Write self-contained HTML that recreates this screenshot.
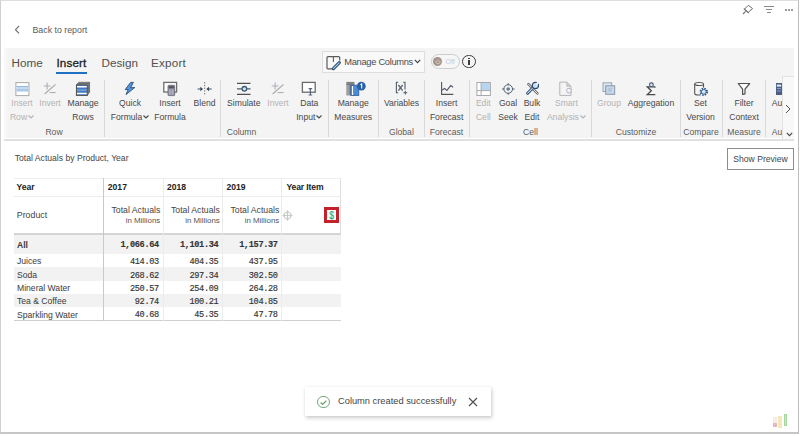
<!DOCTYPE html>
<html><head><meta charset="utf-8"><style>
*{box-sizing:border-box}
html,body{margin:0;padding:0}
body{width:800px;height:436px;position:relative;overflow:hidden;background:#fff;font-family:"Liberation Sans", sans-serif;color:#333}
.a{position:absolute}
.rl{position:absolute;width:80px;text-align:center;font-size:8.6px;line-height:12px;white-space:nowrap}
.gl{position:absolute;width:80px;text-align:center;font-size:8.6px;line-height:12px;top:126px;color:#5c5c5c;white-space:nowrap}
.sep{position:absolute;top:80px;width:1px;height:57px;background:#d9d9d9}
.ic{position:absolute;width:20px;height:20px}
.ic svg{display:block}
.tc{position:absolute;font-size:8.6px;line-height:12px;color:#3a3a3a;white-space:nowrap}
.tv{position:absolute;width:60.35px;text-align:right;font-family:"Liberation Mono", monospace;font-size:8.6px;letter-spacing:-0.35px;line-height:12px;color:#333;white-space:nowrap;-webkit-text-stroke:0.15px #333}
</style></head><body>
<!-- outer frame -->
<div class="a" style="left:0;top:0;width:798.5px;height:434px;border:1px solid #d0d0d0;border-top-color:#dedede;border-right:1.5px solid #bdbdbd;border-bottom:2px solid #c6c6c6"></div>

<!-- top-right icons -->
<svg class="a" style="left:738px;top:0px" width="20" height="18" viewBox="0 0 20 18">
  <path d="M10.3 5.3 L14.6 8.6 L10.2 12.4 L6.5 9.1 Z" fill="none" stroke="#707070" stroke-width="1" stroke-linejoin="round"/>
  <path d="M5.8 8.6 L10.8 13.1" stroke="#707070" stroke-width="1.1"/>
  <path d="M7.6 11.4 L5 14" stroke="#707070" stroke-width="1.1"/>
</svg>
<div class="a" style="left:764px;top:5.5px;width:10px;height:1px;background:#8c8c8c"></div>
<div class="a" style="left:765.5px;top:8.5px;width:6.5px;height:1px;background:#8c8c8c"></div>
<div class="a" style="left:767px;top:11.5px;width:3.5px;height:1px;background:#8c8c8c"></div>
<div class="a" style="left:785px;top:8.8px;width:2px;height:2px;border-radius:1px;background:#7a7a7a"></div>
<div class="a" style="left:788.2px;top:8.8px;width:2px;height:2px;border-radius:1px;background:#7a7a7a"></div>
<div class="a" style="left:791.4px;top:8.8px;width:2px;height:2px;border-radius:1px;background:#7a7a7a"></div>

<!-- back to report -->
<svg class="a" style="left:14px;top:25px" width="7" height="10" viewBox="0 0 7 10"><path d="M5 1 L1.5 4.7 L5 8.4" fill="none" stroke="#6b6b6b" stroke-width="1.1"/></svg>
<div class="a" style="left:32.5px;top:23px;font-size:8.8px;line-height:14px;color:#5a5a5a;white-space:nowrap">Back to report</div>

<!-- ribbon -->
<div class="a" style="left:3.5px;top:48px;width:790px;height:89.8px;background:#f8f8f8"></div>
<div class="a" style="left:6.5px;top:48px;width:787px;height:89.8px;background:#f4f4f4"></div>
<div class="a" style="left:4px;top:138.8px;width:789.5px;height:2px;background:#e0e0e0"></div>
<div class="a" style="left:11.5px;top:55px;font-size:11.7px;line-height:16px;color:#505050">Home</div>
<div class="a" style="left:56.5px;top:55px;font-size:11.7px;line-height:16px;color:#222;letter-spacing:0.1px;-webkit-text-stroke:0.3px #222">Insert</div>
<div class="a" style="left:56px;top:72px;width:30.5px;height:2px;background:#1f6fc2"></div>
<div class="a" style="left:101.5px;top:55px;font-size:11.7px;line-height:16px;color:#505050">Design</div>
<div class="a" style="left:151px;top:55px;font-size:11.7px;line-height:16px;color:#505050;letter-spacing:0.2px">Export</div>

<!-- manage columns -->
<div class="a" style="left:321.8px;top:51.2px;width:103px;height:21.5px;border:1px solid #dedede;background:#f9f9f9"></div>
<div class="a" style="left:344.3px;top:54.5px;font-size:9.3px;line-height:14px;color:#4c4c4c;white-space:nowrap;letter-spacing:-0.3px">Manage Columns</div>
<svg class="a" style="left:325px;top:55px" width="17" height="16" viewBox="0 0 17 16">
  <path d="M7.6 13.9 H3 Q2 13.9 2 12.9 V2.6 Q2 1.6 3 1.6 H13.7 Q14.7 1.6 14.7 2.6 V5.5" fill="none" stroke="#5a5a5a" stroke-width="1.2"/>
  <path d="M8.4 1.6 V7" stroke="#5a5a5a" stroke-width="1.1"/>
  <path d="M8.4 13.6 L14.3 7.7" stroke="#2f4a6a" stroke-width="3.2" stroke-linecap="round"/>
  <path d="M8.6 13.4 L14.1 7.9" stroke="#a8d0f0" stroke-width="1.2" stroke-linecap="round"/>
</svg>
<svg class="a" style="left:414px;top:59px" width="7" height="5" viewBox="0 0 7 5"><path d="M0.8 0.8 L3.5 3.6 L6.2 0.8" fill="none" stroke="#444" stroke-width="1.2"/></svg>
<div class="a" style="left:430.5px;top:54.2px;width:29px;height:15.3px;border:1px solid #cdcdcd;border-radius:8px;background:#f6f6f6"></div>
<div class="a" style="left:433.4px;top:57.4px;width:9px;height:9px;border-radius:5px;background:#a3938a"></div>
<svg class="a" style="left:435px;top:59px" width="6" height="6" viewBox="0 0 6 6"><path d="M3 0.6 V2.6 M1.4 1.6 A2 2 0 1 0 4.6 1.6" fill="none" stroke="#e8e0da" stroke-width="0.7"/></svg>
<div class="a" style="left:445.4px;top:55.8px;font-size:7.2px;line-height:12px;color:#c8cdd8">Off</div>
<div class="a" style="left:462.1px;top:54.7px;width:13.8px;height:13.8px;border:1.15px solid #3c3c3c;border-radius:7px"></div>
<div class="a" style="left:468.3px;top:57.6px;width:1.4px;height:1.4px;background:#3c3c3c"></div>
<div class="a" style="left:468.3px;top:60.4px;width:1.4px;height:4.6px;background:#3c3c3c"></div>

<div class="rl" style="left:-18px;top:97px;color:#b3b3b3">Insert</div>
<div class="rl" style="left:-18px;top:110.5px;color:#b3b3b3">Row<svg width="6" height="4" viewBox="0 0 6 4" style="margin-left:1px;vertical-align:1px"><path d="M0.5 0.5 L3 3 L5.5 0.5" fill="none" stroke="#b3b3b3" stroke-width="1.1"/></svg></div>
<div class="ic" style="left:12px;top:78px"><svg width="20" height="20" viewBox="0 0 20 20"><rect x="3.9" y="4.6" width="13" height="13" fill="#fff" stroke="#a8a8a8" stroke-width="1"/><rect x="4.4" y="8" width="12" height="5.8" fill="#c3dbf0"/><path d="M4.4 8.5 H16.4 M4.4 12 H16.4" stroke="#8fb4d8" stroke-width="0.9"/></svg></div>
<div class="rl" style="left:10px;top:97px;color:#b3b3b3">Invert</div>
<div class="ic" style="left:40px;top:78px"><svg width="20" height="20" viewBox="0 0 20 20"><path d="M7.1 4.6 V11.5 M3.7 8 H10.5" stroke="#a9b0b8" stroke-width="1.1"/><path d="M4.6 16 L15.6 6.4" stroke="#a8a8a8" stroke-width="1.1"/><path d="M9.6 14.6 H15.6" stroke="#a8a8a8" stroke-width="1"/></svg></div>
<div class="rl" style="left:43px;top:97px;color:#484848">Manage</div>
<div class="rl" style="left:43px;top:110.5px;color:#484848">Rows</div>
<div class="ic" style="left:73px;top:78px"><svg width="20" height="20" viewBox="0 0 20 20"><rect x="5.8" y="4.3" width="10.8" height="10" fill="#9a9a9a" stroke="#6a6a6a" stroke-width="0.9"/><rect x="4.6" y="5.5" width="10.8" height="10.5" fill="#b4b4b4" stroke="#6a6a6a" stroke-width="0.9"/><rect x="3.5" y="6.8" width="10.8" height="10.6" fill="#3f7bc4" stroke="#555" stroke-width="1.1"/><path d="M4 8.7 H13.8 M4 15.5 H13.8" stroke="#fff" stroke-width="1.4"/><path d="M4 12.1 H13.8" stroke="#9cc0e8" stroke-width="0.9"/></svg></div>
<div class="rl" style="left:90px;top:97px;color:#484848">Quick</div>
<div class="rl" style="left:90px;top:110.5px;color:#484848">Formula<svg width="6" height="4" viewBox="0 0 6 4" style="margin-left:1px;vertical-align:1px"><path d="M0.5 0.5 L3 3 L5.5 0.5" fill="none" stroke="#484848" stroke-width="1.1"/></svg></div>
<div class="ic" style="left:120px;top:78px"><svg width="20" height="20" viewBox="0 0 20 20"><path d="M10.6 4.4 L13.4 4.4 L10.6 9.7 L14.8 9.5 L6 16.6 L8.2 11.5 L5.2 11.6 Z" fill="#4d95e0" stroke="#2f4f72" stroke-width="0.9" stroke-linejoin="round"/></svg></div>
<div class="rl" style="left:130px;top:97px;color:#484848">Insert</div>
<div class="rl" style="left:130px;top:110.5px;color:#484848">Formula</div>
<div class="ic" style="left:160px;top:78px"><svg width="20" height="20" viewBox="0 0 20 20"><rect x="3.8" y="4.4" width="12.8" height="9.6" fill="#fff" stroke="#6d6d6d" stroke-width="1.3"/><rect x="8" y="7.3" width="6.7" height="10.3" rx="0.8" fill="#9c9cae" stroke="#5e5e68" stroke-width="0.8"/><rect x="8.8" y="8.2" width="5.1" height="2.2" fill="#505058"/><path d="M9.8 11.8 V16.5 M12.6 11.8 V16.5" stroke="#c8c8d4" stroke-width="0.6"/></svg></div>
<div class="rl" style="left:164.5px;top:97px;color:#484848">Blend</div>
<div class="ic" style="left:194.5px;top:78px"><svg width="20" height="20" viewBox="0 0 20 20"><path d="M9.7 4.2 V17" stroke="#6a6a6a" stroke-width="1" stroke-dasharray="1.3 1.4"/><path d="M2.6 11 H7" stroke="#4a5a70" stroke-width="1.1"/><path d="M5.4 8.8 L8 11 L5.4 13.2 Z" fill="#34465e"/><path d="M16.6 11 H12.4" stroke="#4a5a70" stroke-width="1.1"/><path d="M14 8.8 L11.4 11 L14 13.2 Z" fill="#34465e"/></svg></div>
<div class="rl" style="left:203.8px;top:97px;color:#484848">Simulate</div>
<div class="ic" style="left:233.8px;top:78px"><svg width="20" height="20" viewBox="0 0 20 20"><path d="M3 5.3 H16.5 M3 16.3 H16.5" stroke="#505050" stroke-width="1.2"/><path d="M3 10.8 H7.9 M12.9 10.8 H16.5" stroke="#505a64" stroke-width="1.2"/><circle cx="10.4" cy="10.8" r="2.3" fill="#cfe3f4" stroke="#3d5a78" stroke-width="1.3"/></svg></div>
<div class="rl" style="left:238px;top:97px;color:#b3b3b3">Invert</div>
<div class="ic" style="left:268px;top:78px"><svg width="20" height="20" viewBox="0 0 20 20"><path d="M7.1 4.6 V11.5 M3.7 8 H10.5" stroke="#a9b0b8" stroke-width="1.1"/><path d="M4.6 16 L15.6 6.4" stroke="#a8a8a8" stroke-width="1.1"/><path d="M9.6 14.6 H15.6" stroke="#a8a8a8" stroke-width="1"/></svg></div>
<div class="rl" style="left:269.3px;top:97px;color:#484848">Data</div>
<div class="rl" style="left:269.3px;top:110.5px;color:#484848">Input<svg width="6" height="4" viewBox="0 0 6 4" style="margin-left:1px;vertical-align:1px"><path d="M0.5 0.5 L3 3 L5.5 0.5" fill="none" stroke="#484848" stroke-width="1.1"/></svg></div>
<div class="ic" style="left:299.3px;top:78px"><svg width="20" height="20" viewBox="0 0 20 20"><rect x="3.4" y="4.4" width="12.8" height="9.8" fill="#fff" stroke="#6a6a6a" stroke-width="1.3"/><path d="M9.6 10.6 H13.2 M11.4 10.6 V16.6 M9.6 17 H13.2" stroke="#55657a" stroke-width="1.2"/></svg></div>
<div class="rl" style="left:313.2px;top:97px;color:#484848">Manage</div>
<div class="rl" style="left:313.2px;top:110.5px;color:#484848">Measures</div>
<div class="ic" style="left:343.2px;top:78px"><svg width="24" height="20" viewBox="0 0 24 20"><rect x="3.4" y="4.4" width="8" height="13" fill="#8c8c8c"/><path d="M3.4 4.4 H11.4 M3.4 6.2 H11.4" stroke="#6a6a6a" stroke-width="0.8"/><path d="M5 7 V17" stroke="#b8b8b8" stroke-width="0.9"/><rect x="7.8" y="7.2" width="8" height="10.2" fill="#4a8ad6" stroke="#2d5d98" stroke-width="0.8"/><path d="M9.5 8 V17" stroke="#ffffff" stroke-width="1.2"/><circle cx="18.3" cy="8.2" r="4.4" fill="#2760a8"/><path d="M17.4 6.9 L18.7 5.9 V10.4" fill="none" stroke="#fff" stroke-width="1.1"/></svg></div>
<div class="rl" style="left:361.5px;top:97px;color:#484848">Variables</div>
<div class="ic" style="left:391.5px;top:78px"><svg width="20" height="20" viewBox="0 0 20 20"><path d="M6.2 4.3 H4.4 V14.7 H6.2" fill="none" stroke="#555d66" stroke-width="1.1"/><path d="M11.2 4.3 H13 V11.6" fill="none" stroke="#555d66" stroke-width="1.1"/><path d="M6.4 7 L10.6 12.6 M10.6 7 L6.4 12.6" stroke="#5a6572" stroke-width="1.35"/><path d="M13.3 12.8 V16.6 M11.4 14.7 H15.2" stroke="#4a5a70" stroke-width="1"/></svg></div>
<div class="rl" style="left:406.6px;top:97px;color:#484848">Insert</div>
<div class="rl" style="left:406.6px;top:110.5px;color:#484848">Forecast</div>
<div class="ic" style="left:436.6px;top:78px"><svg width="20" height="20" viewBox="0 0 20 20"><path d="M4.6 4.1 V16.4 H16.3" fill="none" stroke="#555" stroke-width="1.1"/><path d="M4.6 12.3 L7.6 10.5 L9.9 12.4 L13.7 7.6 L16.1 9.3" fill="none" stroke="#505a66" stroke-width="1.1"/></svg></div>
<div class="rl" style="left:443.3px;top:97px;color:#b3b3b3">Edit</div>
<div class="rl" style="left:443.3px;top:110.5px;color:#b3b3b3">Cell</div>
<div class="ic" style="left:473.3px;top:78px"><svg width="20" height="20" viewBox="0 0 20 20"><rect x="3.9" y="4.5" width="13.5" height="13" fill="#fff" stroke="#a9a9a9" stroke-width="1"/><rect x="8.2" y="5" width="8.7" height="7.5" fill="#b5d5f2"/><path d="M8.1 4.5 V17.5 M3.9 12.6 H17.4" stroke="#a9a9a9" stroke-width="1"/></svg></div>
<div class="rl" style="left:468px;top:97px;color:#484848">Goal</div>
<div class="rl" style="left:468px;top:110.5px;color:#484848">Seek</div>
<div class="ic" style="left:498px;top:78px"><svg width="20" height="20" viewBox="0 0 20 20"><circle cx="10.2" cy="11" r="4.3" fill="#eef4fa" stroke="#59616b" stroke-width="1"/><circle cx="10.2" cy="11" r="1.8" fill="#6a7886"/><path d="M10.2 5.2 V7.2 M10.2 14.8 V16.8 M4 11 H6.2 M14.2 11 H16.6" stroke="#59616b" stroke-width="1"/></svg></div>
<div class="rl" style="left:492px;top:97px;color:#484848">Bulk</div>
<div class="rl" style="left:492px;top:110.5px;color:#484848">Edit</div>
<div class="ic" style="left:522px;top:78px"><svg width="20" height="20" viewBox="0 0 20 20"><path d="M6.4 6.2 L15.4 15.4" stroke="#707070" stroke-width="2.6" stroke-linecap="round"/><path d="M6.4 6.2 L15.4 15.4" stroke="#e4e4e4" stroke-width="1" stroke-linecap="round"/><path d="M5.6 15.2 L12 8.8" stroke="#2c4a6e" stroke-width="3" stroke-linecap="round"/><path d="M5.6 15.2 L12 8.8" stroke="#c4dcf4" stroke-width="1.1" stroke-linecap="round"/><circle cx="13.4" cy="7.4" r="3.1" fill="#c4dcf4" stroke="#2c4a6e" stroke-width="1.2"/><path d="M13.8 7 L16.6 4.2" stroke="#f4f4f4" stroke-width="2"/></svg></div>
<div class="rl" style="left:526.4px;top:97px;color:#b3b3b3">Smart</div>
<div class="rl" style="left:526.4px;top:110.5px;color:#b3b3b3">Analysis<svg width="6" height="4" viewBox="0 0 6 4" style="margin-left:1px;vertical-align:1px"><path d="M0.5 0.5 L3 3 L5.5 0.5" fill="none" stroke="#b3b3b3" stroke-width="1.1"/></svg></div>
<div class="ic" style="left:556.4px;top:78px"><svg width="20" height="20" viewBox="0 0 20 20"><path d="M3.8 4.1 H10.8 L15 8.2 V17.4 H3.8 Z" fill="none" stroke="#b4b4b4" stroke-width="1"/><path d="M10.8 4.1 V8.2 H15" fill="#d0d0d0" stroke="#b4b4b4" stroke-width="0.8"/><circle cx="13" cy="12.6" r="2.4" fill="#f3f3f3" stroke="#b0b4c0" stroke-width="1"/></svg></div>
<div class="rl" style="left:569px;top:97px;color:#b3b3b3">Group</div>
<div class="ic" style="left:599px;top:78px"><svg width="20" height="20" viewBox="0 0 20 20"><rect x="4" y="4.8" width="8.7" height="8.7" fill="#dbe7f3" stroke="#9aa6b4" stroke-width="1"/><rect x="6.7" y="7.8" width="9" height="8.5" fill="#c6d8ea" stroke="#8a98a8" stroke-width="1"/><rect x="8.8" y="9.8" width="4" height="4" fill="#b3c8dc"/></svg></div>
<div class="rl" style="left:611px;top:97px;color:#484848">Aggregation</div>
<div class="ic" style="left:641px;top:78px"><svg width="20" height="20" viewBox="0 0 20 20"><path d="M14.3 8.8 H6.3 L10.3 12.7 L6.3 16.6 H14.3" fill="none" stroke="#484848" stroke-width="1.3" stroke-linejoin="miter"/><circle cx="10.4" cy="6.8" r="1.9" fill="#dce8f4" stroke="#4a5a72" stroke-width="1.1"/><path d="M13.8 8.6 L14.2 9.6" stroke="#4a5a72" stroke-width="1"/></svg></div>
<div class="rl" style="left:660.5px;top:97px;color:#484848">Set</div>
<div class="rl" style="left:660.5px;top:110.5px;color:#484848">Version</div>
<div class="ic" style="left:690.5px;top:78px"><svg width="20" height="20" viewBox="0 0 20 20"><ellipse cx="8.1" cy="6" rx="4.4" ry="1.5" fill="#fff" stroke="#555" stroke-width="1.1"/><path d="M3.7 6 V15.6 A4.4 1.5 0 0 0 9.6 16.9" fill="none" stroke="#555" stroke-width="1.1"/><path d="M12.5 6 V9.6" stroke="#555" stroke-width="1.1"/><circle cx="12.8" cy="13.8" r="3.3" fill="none" stroke="#2c5a8a" stroke-width="1.8" stroke-dasharray="1.5 1.1"/><circle cx="12.8" cy="13.8" r="2.4" fill="#d8e6f4" stroke="#2c5a8a" stroke-width="0.9"/></svg></div>
<div class="rl" style="left:704px;top:97px;color:#484848">Filter</div>
<div class="rl" style="left:704px;top:110.5px;color:#484848">Context</div>
<div class="ic" style="left:734px;top:78px"><svg width="20" height="20" viewBox="0 0 20 20"><path d="M4.2 5.5 H15.7 L11 11.2 V15.8 L8.6 16.3 V11.2 Z" fill="#fff" stroke="#505050" stroke-width="1.2" stroke-linejoin="round"/></svg></div>
<div class="rl" style="left:737px;top:97px;color:#484848">Au</div>
<div class="ic" style="left:767px;top:78px"><svg width="20" height="20" viewBox="0 0 20 20"><rect x="9" y="5" width="6" height="12" fill="#4a5e86"/><rect x="9.8" y="6.6" width="4.4" height="2" fill="#e8eef8"/><path d="M10 10.5 H14 M10 13 H14" stroke="#9ab0d8" stroke-width="0.8"/></svg></div>
<div class="sep" style="left:103.5px"></div>
<div class="sep" style="left:220.0px"></div>
<div class="sep" style="left:328.1px"></div>
<div class="sep" style="left:377.5px"></div>
<div class="sep" style="left:423.7px"></div>
<div class="sep" style="left:469.3px"></div>
<div class="sep" style="left:590.5px"></div>
<div class="sep" style="left:680.3px"></div>
<div class="sep" style="left:722.0px"></div>
<div class="sep" style="left:765.2px"></div>
<div class="gl" style="left:14px">Row</div>
<div class="gl" style="left:201.5px">Column</div>
<div class="gl" style="left:361.4px">Global</div>
<div class="gl" style="left:406.5px">Forecast</div>
<div class="gl" style="left:490.5px">Cell</div>
<div class="gl" style="left:596px">Customize</div>
<div class="gl" style="left:661px">Compare</div>
<div class="gl" style="left:704px">Measure</div>
<div class="gl" style="left:737px">Au</div>

<!-- ribbon scroll panel -->
<div class="a" style="left:782px;top:76px;width:12px;height:64px;background:#f8f8f8;border:1px solid #e2e2e2;border-right:none"></div>
<svg class="a" style="left:785px;top:103.5px" width="7" height="10" viewBox="0 0 7 10"><path d="M1 1 L5 5 L1 9" fill="none" stroke="#555" stroke-width="1"/></svg>
<svg class="a" style="left:785.5px;top:132px" width="7" height="5" viewBox="0 0 7 5"><path d="M0.8 0.8 L3.5 3.6 L6.2 0.8" fill="none" stroke="#444" stroke-width="1.1"/></svg>

<!-- content -->
<div class="a" style="left:14.8px;top:150.6px;font-size:8.6px;line-height:14px;color:#444;white-space:nowrap">Total Actuals by Product, Year</div>
<div class="a" style="left:727px;top:148px;width:67px;height:22px;border:1px solid #8c8c8c;background:#fff"></div>
<div class="a" style="left:727px;top:152px;width:67px;text-align:center;font-size:8.6px;line-height:14px;color:#444">Show Preview</div>

<!-- table -->
<div class="a" style="left:14px;top:177.5px;width:327px;height:143.5px;border-top:1px solid #efefef;border-right:1px solid #dedede;border-bottom:1px solid #cfcfcf"></div>
<div style="position:absolute;left:14px;top:234.5px;width:327px;height:19.099999999999994px;background:#f2f2f2"></div>
<div style="position:absolute;left:14px;top:253.6px;width:327px;height:13.599999999999994px;background:#ffffff"></div>
<div style="position:absolute;left:14px;top:267.2px;width:327px;height:13.600000000000023px;background:#f2f2f2"></div>
<div style="position:absolute;left:14px;top:280.8px;width:327px;height:13.399999999999977px;background:#ffffff"></div>
<div style="position:absolute;left:14px;top:294.2px;width:327px;height:13.0px;background:#f2f2f2"></div>
<div style="position:absolute;left:14px;top:307.2px;width:327px;height:13.300000000000011px;background:#ffffff"></div>
<div class="tc" style="left:17px;top:238.65px;font-weight:bold">All</div>
<div class="tv" style="left:98.5px;top:239.05px;font-weight:bold">1,066.64</div>
<div class="tv" style="left:158px;top:239.05px;font-weight:bold">1,101.34</div>
<div class="tv" style="left:217.3px;top:239.05px;font-weight:bold">1,157.37</div>
<div class="tc" style="left:17px;top:255.09999999999997px;font-weight:normal">Juices</div>
<div class="tv" style="left:98.5px;top:255.89999999999998px;font-weight:normal">414.03</div>
<div class="tv" style="left:158px;top:255.89999999999998px;font-weight:normal">404.35</div>
<div class="tv" style="left:217.3px;top:255.89999999999998px;font-weight:normal">437.95</div>
<div class="tc" style="left:17px;top:268.7px;font-weight:normal">Soda</div>
<div class="tv" style="left:98.5px;top:269.5px;font-weight:normal">268.62</div>
<div class="tv" style="left:158px;top:269.5px;font-weight:normal">297.34</div>
<div class="tv" style="left:217.3px;top:269.5px;font-weight:normal">302.50</div>
<div class="tc" style="left:17px;top:282.2px;font-weight:normal">Mineral Water</div>
<div class="tv" style="left:98.5px;top:283.0px;font-weight:normal">250.57</div>
<div class="tv" style="left:158px;top:283.0px;font-weight:normal">254.09</div>
<div class="tv" style="left:217.3px;top:283.0px;font-weight:normal">264.28</div>
<div class="tc" style="left:17px;top:295.4px;font-weight:normal">Tea &amp; Coffee</div>
<div class="tv" style="left:98.5px;top:296.2px;font-weight:normal">92.74</div>
<div class="tv" style="left:158px;top:296.2px;font-weight:normal">100.21</div>
<div class="tv" style="left:217.3px;top:296.2px;font-weight:normal">104.85</div>
<div class="tc" style="left:17px;top:308.55px;font-weight:normal">Sparkling Water</div>
<div class="tv" style="left:98.5px;top:309.35px;font-weight:normal">40.68</div>
<div class="tv" style="left:158px;top:309.35px;font-weight:normal">45.35</div>
<div class="tv" style="left:217.3px;top:309.35px;font-weight:normal">47.78</div>
<div class="a" style="left:14px;top:196px;width:327px;height:1px;background:#ececec"></div>
<div class="a" style="left:14px;top:232.5px;width:327px;height:2px;background:#d4d4d4"></div>
<div class="a" style="left:103px;top:178px;width:1px;height:143px;background:#c9c9c9"></div>
<div class="a" style="left:162.5px;top:178px;width:1px;height:143px;background:#ececec"></div>
<div class="a" style="left:221.8px;top:178px;width:1px;height:143px;background:#ececec"></div>
<div class="a" style="left:281.3px;top:178px;width:1px;height:143px;background:#ececec"></div>
<div class="a" style="left:16.5px;top:180.5px;font-size:8.6px;line-height:12px;font-weight:bold;color:#222">Year</div>
<div class="a" style="left:107.8px;top:180.5px;font-size:8.6px;line-height:12px;font-weight:bold;color:#222">2017</div>
<div class="a" style="left:167px;top:180.5px;font-size:8.6px;line-height:12px;font-weight:bold;color:#222">2018</div>
<div class="a" style="left:226.5px;top:180.5px;font-size:8.6px;line-height:12px;font-weight:bold;color:#222">2019</div>
<div class="a" style="left:286.5px;top:180.5px;font-size:8.6px;line-height:12px;font-weight:bold;color:#222;white-space:nowrap;letter-spacing:-0.15px">Year Item</div>
<div class="a" style="left:16.8px;top:209px;font-size:8.8px;line-height:12px;color:#444">Product</div>
<div class="a" style="left:100px;top:204px;width:60.3px;text-align:right;font-size:8.7px;line-height:12px;color:#444;white-space:nowrap">Total Actuals</div>
<div class="a" style="left:159.5px;top:204px;width:60.3px;text-align:right;font-size:8.7px;line-height:12px;color:#444;white-space:nowrap">Total Actuals</div>
<div class="a" style="left:219px;top:204px;width:60.3px;text-align:right;font-size:8.7px;line-height:12px;color:#444;white-space:nowrap">Total Actuals</div>
<div class="a" style="left:100px;top:216px;width:60.3px;text-align:right;font-size:7.9px;line-height:10px;color:#555;white-space:nowrap">in Millions</div>
<div class="a" style="left:159.5px;top:216px;width:60.3px;text-align:right;font-size:7.9px;line-height:10px;color:#555;white-space:nowrap">in Millions</div>
<div class="a" style="left:219px;top:216px;width:60.3px;text-align:right;font-size:7.9px;line-height:10px;color:#555;white-space:nowrap">in Millions</div>
<!-- move icon + $ -->
<svg class="a" style="left:282px;top:209.5px" width="11" height="11" viewBox="0 0 11 11"><path d="M5.5 0.8 V10.2 M1 5.5 H10 M3.6 2.6 L5.5 0.8 L7.4 2.6 M3.6 8.4 L5.5 10.2 L7.4 8.4 M2.4 3.9 L1 5.5 L2.4 7.1 M8.6 3.9 L10 5.5 L8.6 7.1" fill="none" stroke="#c4c4c4" stroke-width="0.9"/><rect x="2.6" y="3" width="5.8" height="5" fill="none" stroke="#c9c9c9" stroke-width="0.8"/></svg>
<div class="a" style="left:323.5px;top:207.2px;width:15.8px;height:16px;border:3px solid #c4222b"></div>
<div class="a" style="left:323.5px;top:208.3px;width:15.3px;text-align:center;font-size:10px;line-height:15px;color:#2fa865;-webkit-text-stroke:0.2px #2fa865;transform:scaleX(0.85)">$</div>

<!-- toast -->
<div class="a" style="left:305px;top:387px;width:186px;height:28.8px;background:#fff;box-shadow:1px 2px 4px rgba(0,0,0,0.2), 0 0 2px rgba(0,0,0,0.06)"></div>
<div class="a" style="left:317.3px;top:395.6px;width:12.4px;height:12.4px;border:1.3px solid #7aa67a;border-radius:50%"></div>
<svg class="a" style="left:317px;top:395.5px" width="13" height="13" viewBox="0 0 13 13"><path d="M3.6 6.5 L5.6 8.4 L9.3 4.7" fill="none" stroke="#6aa46a" stroke-width="1.3"/></svg>
<div class="a" style="left:338px;top:394px;font-size:9.3px;line-height:14px;color:#444;white-space:nowrap">Column created successfully</div>
<svg class="a" style="left:467.5px;top:396.5px" width="10" height="10" viewBox="0 0 10 10"><path d="M1 1 L9 9 M9 1 L1 9" stroke="#505050" stroke-width="1.15"/></svg>

<!-- bottom-right bars -->
<div class="a" style="left:773px;top:417px;width:3.5px;height:6px;background:#f8eaea"></div>
<div class="a" style="left:773px;top:423px;width:3.5px;height:3.8px;background:#e6b8be"></div>
<div class="a" style="left:778.2px;top:416px;width:3.8px;height:12px;background:#f4e8b8"></div>
<div class="a" style="left:783.6px;top:413.8px;width:3.2px;height:12.4px;background:#c8e8c2;border:0.6px solid #a8d6a0"></div>
</body></html>
